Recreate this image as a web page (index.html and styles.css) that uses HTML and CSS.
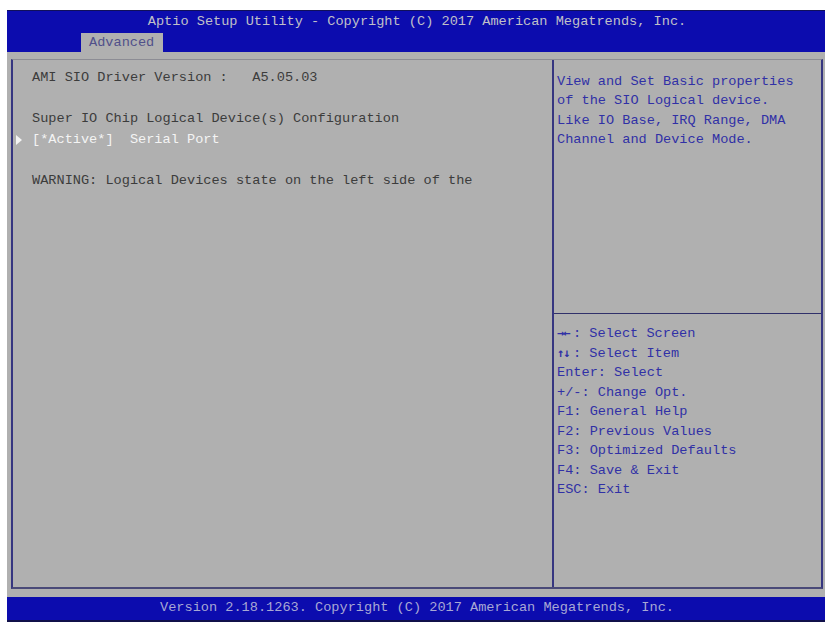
FILE: index.html
```html
<!DOCTYPE html>
<html lang="en">
<head>
<meta charset="UTF-8" />
<title>Aptio Setup Utility</title>
<link rel="stylesheet" href="styles.css">
</head>
<body>

<div class="screen">
  <header class="topbar">
    <div class="title">Aptio Setup Utility - Copyright (C) 2017 American Megatrends, Inc.</div>
    <div class="tabs">
      <span class="tab">Advanced</span>
    </div>
  </header>

  <main class="body">
    <div class="frame">
      <section class="menu">
        <div class="line">AMI SIO Driver Version :   A5.05.03</div>
        <div class="line">&nbsp;</div>
        <div class="line">Super IO Chip Logical Device(s) Configuration</div>
        <div class="line selected"><span class="pointer"></span>[*Active*]  Serial Port</div>
        <div class="line">&nbsp;</div>
        <div class="line">WARNING: Logical Devices state on the left side of the</div>
      </section>

      <aside class="side">
        <div class="desc">
          <div>View and Set Basic properties</div>
          <div>of the SIO Logical device.</div>
          <div>Like IO Base, IRQ Range, DMA</div>
          <div>Channel and Device Mode.</div>
        </div>
        <div class="keys">
          <div><b class="arrows">&rarr;&larr;</b>: Select Screen</div>
          <div><b class="arrows">&uarr;&darr;</b>: Select Item</div>
          <div>Enter: Select</div>
          <div>+/-: Change Opt.</div>
          <div>F1: General Help</div>
          <div>F2: Previous Values</div>
          <div>F3: Optimized Defaults</div>
          <div>F4: Save &amp; Exit</div>
          <div>ESC: Exit</div>
        </div>
      </aside>
    </div>
  </main>

  <footer class="bottombar">Version 2.18.1263. Copyright (C) 2017 American Megatrends, Inc.</footer>
</div>

</body>
</html>
```

FILE: styles.css
```css
body {
  margin: 0;
  background: #fff;
  font-family: "Liberation Mono", "DejaVu Sans Mono", monospace;
  font-size: 13.6px;
}
.screen {
  margin: 10px 1px 0 7px;
  height: 612px;
  display: flex;
  flex-direction: column;
}
/* Barra de cima */
.topbar {
  background: #0c0cae;
  border-top: 1px solid #10105a;
  height: 41px;
  display: flex;
  flex-direction: column;
}
.title {
  color: #c0c0c8;
  text-align: center;
  line-height: 18px;
  padding-top: 2px;
  padding-left: 2px;
}
.tabs {
  margin-top: auto;
  padding-left: 74px;
}
.tab {
  display: inline-block;
  background: #b0b0b0;
  color: #50508a;
  width: 82px;
  height: 19px;
  line-height: 20px;
  text-indent: 8px;
}
/* Area principal */
.body {
  background: #b0b0b0;
  flex: 1;
  padding: 7px 2px 8px 4px;
  display: flex;
}
.frame {
  flex: 1;
  display: grid;
  grid-template-columns: 539px 1fr;
  border-top: 1px solid #8c8c94;
  border-left: 2px solid #363680;
  border-right: 2px solid #363680;
  border-bottom: 2px solid #4a4a78;
}
.menu {
  padding: 8px 0 0 19px;
  color: #3c3c3c;
  line-height: 20.6px;
}
.line {
  position: relative;
  white-space: pre;
}
.selected {
  color: #f4f4f4;
}
.pointer {
  position: absolute;
  left: -16px;
  top: 5px;
  border-left: 6px solid #f4f4f4;
  border-top: 5px solid transparent;
  border-bottom: 5px solid transparent;
}
.side {
  border-left: 2px solid #363680;
  color: #3030a6;
  display: flex;
  flex-direction: column;
}
.desc {
  padding: 12px 0 0 3px;
  line-height: 19.4px;
  height: 241px;
  border-bottom: 1px solid #30306a;
}
.keys {
  padding: 10px 0 0 3px;
  line-height: 19.5px;
}
.arrows {
  display: inline-block;
  width: 16px;
  font-family: "DejaVu Sans Mono", monospace;
  font-size: 12px;
  letter-spacing: -1px;
}
/* Barra de baixo */
.bottombar {
  background: #0c0cae;
  border-bottom: 2px solid #10104a;
  height: 23px;
  line-height: 22px;
  color: #a8a8d4;
  text-align: center;
  padding-left: 2px;
}
```
